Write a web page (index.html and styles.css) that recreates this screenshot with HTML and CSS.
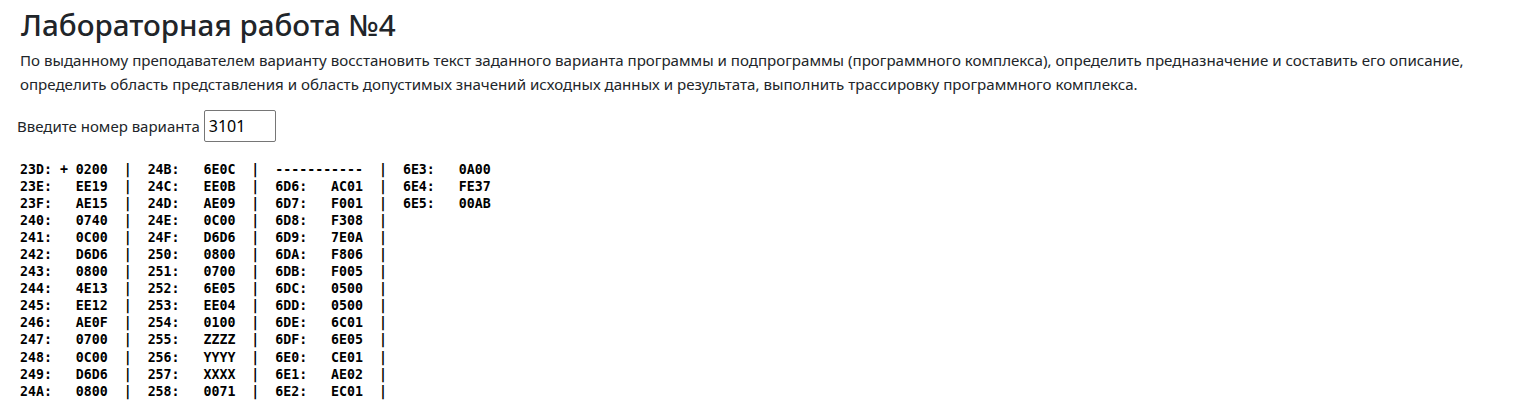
FILE: index.html
```html
<!DOCTYPE html>
<html lang="ru">
<head>
<meta charset="utf-8">
<title>Лабораторная работа №4</title>
<link rel="stylesheet" href="styles.css">
</head>
<body>
<main class="page">
  <h1 class="title">Лабораторная работа №4</h1>
  <p class="task">По выданному преподавателем варианту восстановить текст заданного варианта программы и подпрограммы (программного комплекса), определить предназначение и составить его описание, определить область представления и область допустимых значений исходных данных и результата, выполнить трассировку программного комплекса.</p>
  <form class="variant">
    <label class="variant-label" for="variant">Введите номер варианта</label>
    <input class="variant-input" id="variant" type="text" value="3101">
  </form>
<pre class="listing">23D: + 0200  |  24B:   6E0C  |  -----------  |  6E3:   0A00
23E:   EE19  |  24C:   EE0B  |  6D6:   AC01  |  6E4:   FE37
23F:   AE15  |  24D:   AE09  |  6D7:   F001  |  6E5:   00AB
240:   0740  |  24E:   0C00  |  6D8:   F308  |
241:   0C00  |  24F:   D6D6  |  6D9:   7E0A  |
242:   D6D6  |  250:   0800  |  6DA:   F806  |
243:   0800  |  251:   0700  |  6DB:   F005  |
244:   4E13  |  252:   6E05  |  6DC:   0500  |
245:   EE12  |  253:   EE04  |  6DD:   0500  |
246:   AE0F  |  254:   0100  |  6DE:   6C01  |
247:   0700  |  255:   ZZZZ  |  6DF:   6E05  |
248:   0C00  |  256:   YYYY  |  6E0:   CE01  |
249:   D6D6  |  257:   XXXX  |  6E1:   AE02  |
24A:   0800  |  258:   0071  |  6E2:   EC01  |</pre>
</main>
</body>
</html>
```

FILE: styles.css
```css
html, body {
  margin: 0;
  padding: 0;
  background: #ffffff;
}

body {
  font-family: "Noto Sans", "Open Sans", sans-serif;
  color: #212529;
}

.page {
  padding: 7px 20px 0 20px;
}

.title {
  margin: 0 0 6px 0;
  padding-left: 1px;
  font-size: 29.6px;
  line-height: 35px;
  font-weight: 500;
  color: #212529;
}

.task {
  margin: 0 0 14px 0;
  font-size: 15.1px;
  line-height: 24px;
  max-width: 1460px;
}

.variant {
  display: flex;
  align-items: center;
  gap: 4px;
  margin: 0 0 19px -3px;
}

.variant-label {
  font-size: 15px;
  color: #212529;
}

.variant-input {
  width: 62px;
  height: 28px;
  padding: 1px 4px;
  border: 1px solid #767676;
  border-radius: 2px;
  font-family: "Noto Sans", "Open Sans", sans-serif;
  font-size: 16px;
  color: #000;
}

.listing {
  margin: 0;
  font-family: "DejaVu Sans Mono", monospace;
  font-weight: bold;
  font-size: 13.25px;
  line-height: 17.05px;
  color: #000;
}
```
